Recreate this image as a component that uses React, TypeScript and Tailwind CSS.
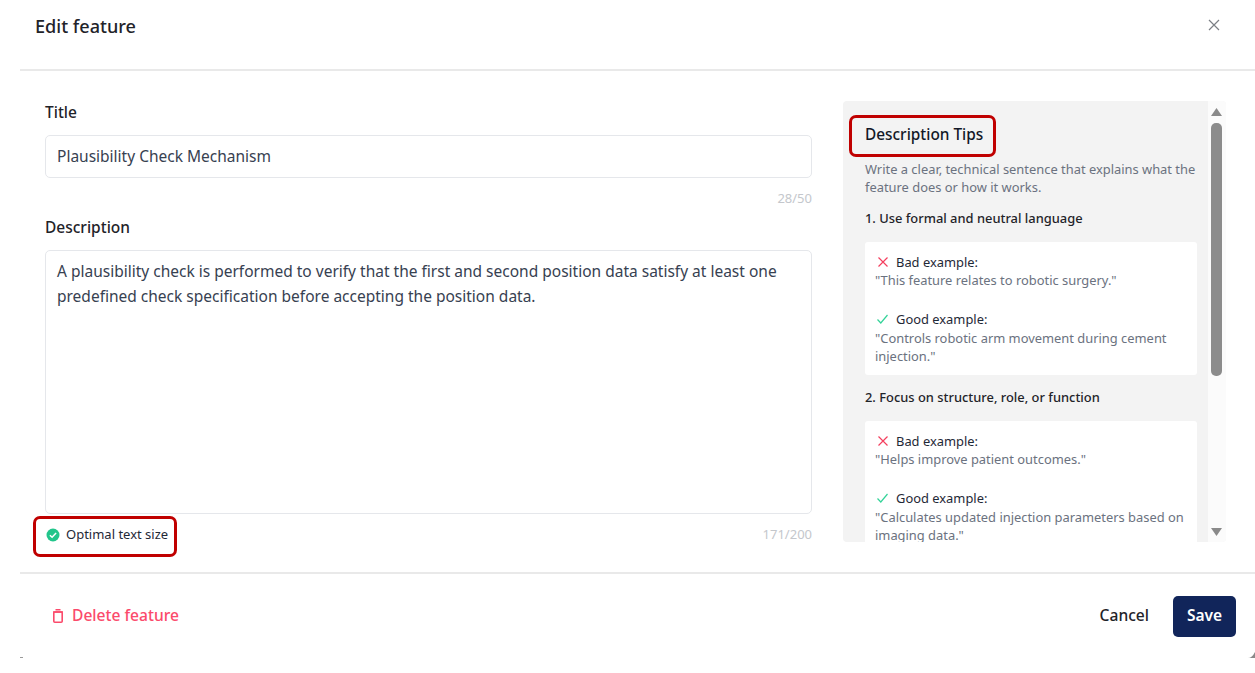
import React from "react";

function Cross() {
  return (
    <svg width="10" height="10" viewBox="0 0 10 10" fill="none" stroke="#f43f5e" strokeWidth="1.2" className="shrink-0">
      <path d="M0.5 0.5L9.5 9.5M9.5 0.5L0.5 9.5" />
    </svg>
  );
}

function Check() {
  return (
    <svg width="11" height="10" viewBox="0 0 11 10" fill="none" stroke="#34d399" strokeWidth="1.2" className="shrink-0">
      <path d="M0.5 5.5L3.8 9L10.5 1" />
    </svg>
  );
}

function Example({ bad, good }: { bad: string; good: string }) {
  return (
    <div className="bg-white rounded-[3px] w-[332px] pl-[10px] pr-[8px] pt-[11px] pb-[10px] text-[12.9px] leading-[18px]">
      <div className="flex items-center gap-[8px] pl-[3px] text-[#1f2937]">
        <Cross />
        <span>Bad example:</span>
      </div>
      <div className="text-[#6b7280]">{bad}</div>
      <div className="flex items-center gap-[8px] pl-[2px] mt-[21px] text-[#1f2937]">
        <Check />
        <span>Good example:</span>
      </div>
      <div className="text-[#6b7280] mt-[1px]">{good}</div>
    </div>
  );
}

export default function App() {
  return (
    <div className="relative w-[1255px] h-[673px] overflow-hidden bg-white text-[#1f2937] [font-family:'Noto_Sans','Open_Sans',sans-serif]">
      <header className="ml-[20px] h-[71px] border-b-2 border-[#e9e9e9] pl-[15px] pr-[35px] pt-[12px] flex items-start justify-between">
        <h1 className="text-[18.1px] leading-[28px] font-medium text-[#1f2329]">Edit feature</h1>
        <svg width="12" height="12" viewBox="0 0 12 12" fill="none" stroke="#7b7f85" strokeWidth="1.2" className="mt-[7px]">
          <path d="M1 1L11 11M11 1L1 11" />
        </svg>
      </header>

      <main className="h-[503px] ml-[20px] pl-[25px] pt-[30px] flex border-b-2 border-[#e9e9e9]">
        <section className="w-[767px] shrink-0">
          <label className="block text-[15.5px] leading-[22px] font-medium text-[#1f2329]">Title</label>
          <div className="mt-[12px] h-[43px] border border-[#e5e7eb] rounded-[5px] px-[11px] pt-[1px] flex items-center text-[15.5px] text-[#374151]">
            Plausibility Check Mechanism
          </div>
          <div className="mt-[12px] text-right text-[13px] leading-[17px] text-[#c4c7cc]">28/50</div>
          <label className="block mt-[9px] text-[15.5px] leading-[22px] font-medium text-[#1f2329]">Description</label>
          <div className="mt-[12px] h-[264px] border border-[#e5e7eb] rounded-[5px] px-[11px] pt-[8px] text-[15.5px] leading-[25px] text-[#374151]">
            A plausibility check is performed to verify that the first and second position data satisfy at least one predefined check specification before accepting the position data.
          </div>
          <div className="mt-[12px] flex items-center justify-between">
            <div className="flex items-center gap-[6px] pl-[1px] text-[13px] leading-[17px] text-[#1f2937]">
              <svg width="14" height="14" viewBox="0 0 14 14">
                <circle cx="7" cy="7" r="6.5" fill="#22c58b" />
                <path d="M3.9 7.2L6.1 9.3L10.1 5" fill="none" stroke="#fff" strokeWidth="1.5" />
              </svg>
              <span>Optimal text size</span>
            </div>
            <div className="text-[13px] leading-[17px] text-[#c4c7cc]">171/200</div>
          </div>
        </section>

        <aside className="relative ml-[31px] w-[383px] h-[441px] shrink-0 bg-[#f3f3f3] rounded-[4px] overflow-hidden flex">
          <div className="w-[365px] h-[441px] overflow-hidden pl-[22px] pt-[23px]">
            <h2 className="text-[15.4px] leading-[22px] font-medium text-[#111827]">Description Tips</h2>
            <p className="mt-[14px] w-[340px] text-[12.9px] leading-[18px] text-[#6b7280]">
              Write a clear, technical sentence that explains what the feature does or how it works.
            </p>
            <h3 className="mt-[13px] text-[12.9px] leading-[18px] font-medium text-[#1f2329]">1. Use formal and neutral language</h3>
            <div className="mt-[15px]">
              <Example bad={'"This feature relates to robotic surgery."'} good={'"Controls robotic arm movement during cement injection."'} />
            </div>
            <h3 className="mt-[13px] text-[12.9px] leading-[18px] font-medium text-[#1f2329]">2. Focus on structure, role, or function</h3>
            <div className="mt-[15px]">
              <Example bad={'"Helps improve patient outcomes."'} good={'"Calculates updated injection parameters based on imaging data."'} />
            </div>
          </div>
          <div className="w-[18px] h-[441px] bg-[#fbfbfb] flex flex-col pl-[3px] pt-[7px]">
            <svg width="11" height="8" viewBox="0 0 11 8" fill="#8a8a8a"><path d="M5.5 0L11 8H0Z" /></svg>
            <div className="w-[11px] h-[253px] mt-[7px] rounded-[5px] bg-[#8c8c8c]" />
            <svg width="11" height="8" viewBox="0 0 11 8" fill="#8a8a8a" className="mt-[152px]"><path d="M0 0H11L5.5 8Z" /></svg>
          </div>
        </aside>
      </main>

      <footer className="ml-[20px] h-[84px] pl-[33px] pr-[19px] flex items-center justify-between">
        <div className="flex items-center gap-[9px] text-[#fb4a6b] text-[15.6px] font-medium">
          <svg width="10" height="14" viewBox="0 0 10 14" fill="none" stroke="#fb4a6b" strokeWidth="1.6">
            <path d="M0 3H10M2.5 0.8H7.5" />
            <rect x="0.8" y="3" width="8.4" height="10.2" rx="1" />
          </svg>
          <span>Delete feature</span>
        </div>
        <div className="flex items-center gap-[24px]">
          <span className="text-[15.6px] font-medium text-[#1f2329]">Cancel</span>
          <div className="w-[63px] h-[41px] rounded-[5px] bg-[#11255a] text-white text-[15.5px] font-semibold flex items-center justify-center">Save</div>
        </div>
      </footer>

      <div className="absolute left-[849px] top-[115px] w-[147px] h-[42px] border-[3.5px] border-[#c00000] rounded-[7px]" />
      <div className="absolute left-[33px] top-[516px] w-[144px] h-[41px] border-[3.5px] border-[#c00000] rounded-[7px]" />
      <svg width="7" height="6" viewBox="0 0 7 6" fill="#8a8a8a" className="absolute right-0 top-[652px]"><path d="M7 0V6H0Q4 6 7 0Z" /></svg>
      <div className="absolute left-[20px] top-[657px] w-[3px] h-[1px] bg-[#9a9a9a]" />
    </div>
  );
}
